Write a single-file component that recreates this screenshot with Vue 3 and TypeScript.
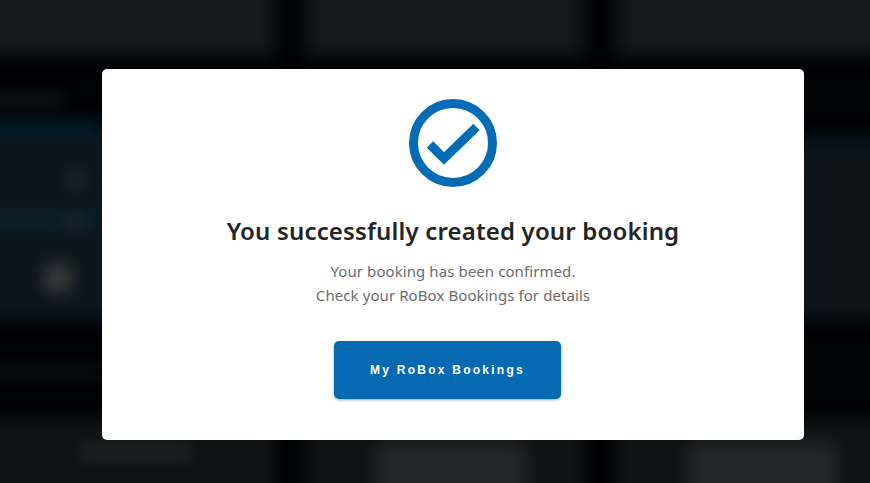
<template>
  <div class="page">
    <div class="backdrop" aria-hidden="true">
      <div class="card-row top">
        <div class="card"></div>
        <div class="card"></div>
        <div class="card"></div>
      </div>
      <section class="details">
        <div class="side">
          <div class="side-title"></div>
          <div class="blue-bar"></div>
          <div class="side-row"><span class="dot small"></span></div>
          <div class="blue-bar thin"><span class="dot small"></span></div>
          <div class="side-row last"><span class="dot"></span></div>
        </div>
        <div class="main-panel"></div>
      </section>
      <div class="band"><span class="band-line"></span></div>
      <div class="card-row bottom">
        <div class="card"><span class="card-label"></span></div>
        <div class="card"><span class="card-btn"></span></div>
        <div class="card"><span class="card-btn"></span></div>
      </div>
    </div>

    <div class="overlay">
      <div class="modal">
        <svg class="check" width="88" height="88" viewBox="0 0 88 88" fill="none">
          <circle cx="44" cy="44" r="39.5" stroke="#046cb4" stroke-width="9" />
          <path d="M21 45.5 L35 59.5 L67.5 28" stroke="#046cb4" stroke-width="9" />
        </svg>
        <h2 class="title">You successfully created your booking</h2>
        <p class="text">Your booking has been confirmed.<br />Check your RoBox Bookings for details</p>
        <button class="btn" type="button">{{ label }}</button>
      </div>
    </div>
  </div>
</template>

<script setup lang="ts">
const label: string = 'My RoBox Bookings'
</script>

<style>
html,
body {
  margin: 0;
  background: #000;
  overflow: hidden;
}
</style>

<style scoped>
.page {
  position: relative;
  width: 870px;
  height: 483px;
  overflow: hidden;
  background: #010305;
}

/* runs 20px past the window on each side so the blur keeps its edges */
.backdrop {
  display: flex;
  flex-direction: column;
  width: 910px;
  height: 523px;
  margin: -20px 0 0 -20px;
  filter: blur(8px);
}

.backdrop > * {
  flex: none;
}

.card-row {
  display: grid;
  grid-template-columns: 295px 280px 1fr;
  gap: 30px;
}

.card-row.top {
  height: 76px;
}

.card-row.bottom {
  height: 83px;
  overflow: hidden;
}

.card {
  background: #14181b;
}

.card-row.top .card:first-child {
  background: #13181e;
}

.bottom .card {
  display: flex;
  justify-content: center;
  padding-top: 28px;
  box-sizing: border-box;
  background: #111415;
}

.bottom .card:first-child {
  padding-left: 16px;
}

.bottom .card:nth-child(2) {
  padding-left: 12px;
}

.bottom .card:last-child {
  padding-left: 18px;
}

.card-label {
  width: 110px;
  height: 8px;
  background: #2a2c2e;
}

.card-btn {
  width: 148px;
  height: 74px;
  margin-top: -3px;
  background: #242628;
}

.details {
  display: flex;
  margin-top: 40px;
  height: 224px;
}

.side {
  width: 122px;
  display: flex;
  flex-direction: column;
}

.side-title {
  width: 84px;
  height: 6px;
  margin-bottom: 18px;
  background: #262b2e;
}

.blue-bar {
  height: 16px;
  background: #032030;
}

.blue-bar.thin {
  height: 14px;
  padding: 4px 0 0 88px;
  box-sizing: border-box;
  background: #05202e;
}

.side-row {
  height: 76px;
  padding: 37px 0 0 88px;
  box-sizing: border-box;
  background: #0d161d;
}

.side-row.last {
  height: 94px;
  padding: 37px 0 0 63px;
}

.dot {
  display: block;
  width: 30px;
  height: 30px;
  border-radius: 50%;
  background: #3a3c3c;
}

.dot.small {
  width: 14px;
  height: 14px;
  background: #2c3234;
}

.main-panel {
  flex: 1;
  margin-top: 38px;
  background: linear-gradient(180deg, #06141e 0, #0e1418 26px);
}

.band {
  height: 100px;
  padding-top: 50px;
  box-sizing: border-box;
}

.band-line {
  display: block;
  width: 125px;
  height: 4px;
  background: #242627;
}

.overlay {
  position: absolute;
  top: 69px;
  left: 102px;
}

.modal {
  width: 702px;
  height: 371px;
  box-sizing: border-box;
  padding-top: 30px;
  background: #fff;
  border-radius: 5px;
  display: flex;
  flex-direction: column;
  align-items: center;
  font-family: "Noto Sans", sans-serif;
}

.check {
  display: block;
}

.title {
  margin: 27px 0 0;
  font-size: 24px;
  line-height: 34px;
  font-weight: 600;
  letter-spacing: 0.16px;
  color: #232323;
}

.text {
  margin: 11px 0 0;
  font-size: 15px;
  line-height: 24px;
  letter-spacing: 0.08px;
  color: #6c6c6c;
  text-align: center;
}

.btn {
  width: 227px;
  height: 58px;
  margin: 34px 11px 0 0;
  border: 0;
  border-radius: 5px;
  background: #056ab2;
  box-shadow: 0 1px 3px rgba(0, 0, 0, 0.35);
  color: #fff;
  font-family: "Liberation Sans", Arial, sans-serif;
  font-size: 12px;
  font-weight: 700;
  letter-spacing: 2.25px;
}
</style>
